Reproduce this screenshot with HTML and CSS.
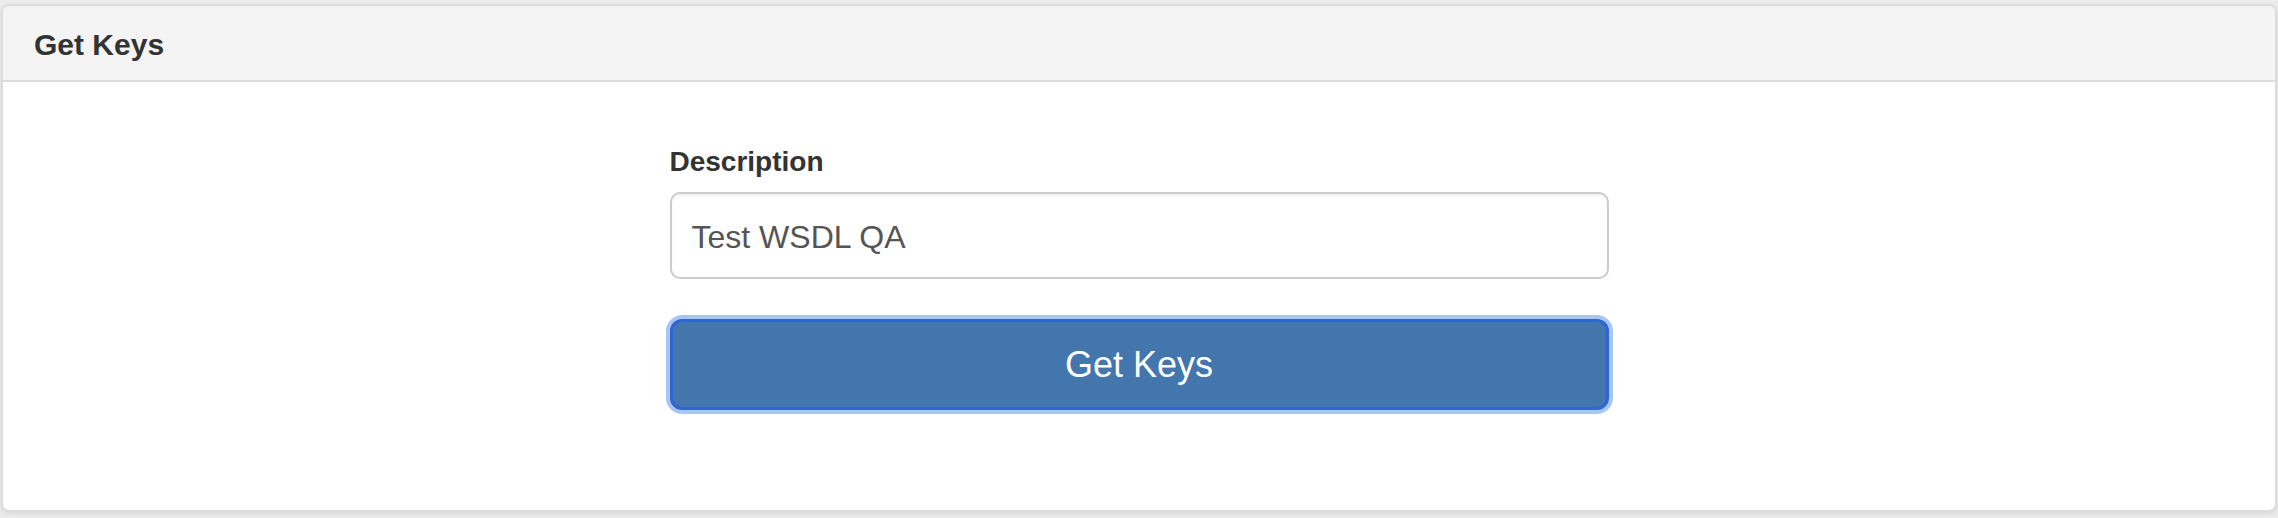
FILE: index.html
```html
<!DOCTYPE html>
<html>
<head>
<meta charset="utf-8">
<title>Get Keys</title>
<link rel="stylesheet" href="styles.css">
</head>
<body>
<div class="panel">
  <div class="panel-heading">
    <h3 class="panel-title">Get Keys</h3>
  </div>
  <div class="panel-body">
    <form class="key-form">
      <label class="field-label" for="desc">Description</label>
      <input class="field-input" id="desc" type="text" value="Test WSDL QA">
      <button class="btn-primary" type="button">Get Keys</button>
    </form>
  </div>
</div>
</body>
</html>
```
FILE: styles.css
```css
html, body {
  margin: 0;
  padding: 0;
  background: #ececec;
  font-family: "Liberation Sans", Arial, Helvetica, sans-serif;
  color: #333;
}
body {
  padding: 4px 1px 0 1px;
  height: 518px;
  box-sizing: border-box;
  overflow: hidden;
}
.panel {
  background: #fff;
  border: 2px solid #dddddd;
  border-radius: 8px;
  box-shadow: 0 2px 4px rgba(0, 0, 0, 0.08);
  overflow: hidden;
}
.panel-heading {
  background: #f4f4f4;
  border-bottom: 2px solid #dddddd;
  padding: 19px 31px 15px;
}
.panel-title {
  margin: 0;
  font-size: 30px;
  line-height: 40px;
  font-weight: bold;
  color: #333;
}
.panel-body {
  padding: 60px 0 100px;
}
.key-form {
  width: 939px;
  margin: 0 auto;
  display: flex;
  flex-direction: column;
}
.field-label {
  font-size: 28px;
  line-height: 40px;
  font-weight: bold;
  color: #333;
  margin-bottom: 10px;
}
.field-input {
  box-sizing: border-box;
  height: 87px;
  width: 100%;
  border: 2px solid #cccccc;
  border-radius: 10px;
  padding: 4px 20px 0;
  font-family: "Liberation Sans", Arial, Helvetica, sans-serif;
  font-size: 32px;
  color: #555;
  background: #fff;
  box-shadow: inset 0 2px 2px rgba(0, 0, 0, 0.05);
  outline: none;
}
.btn-primary {
  box-sizing: border-box;
  margin-top: 40px;
  height: 91px;
  width: 100%;
  background: #4276ad;
  border: 3px solid #2f66d2;
  border-radius: 12px;
  box-shadow: 0 0 0 4px #a8c5f6;
  color: #fff;
  font-family: "Liberation Sans", Arial, Helvetica, sans-serif;
  font-size: 36px;
  padding: 0;
  cursor: pointer;
}
```
